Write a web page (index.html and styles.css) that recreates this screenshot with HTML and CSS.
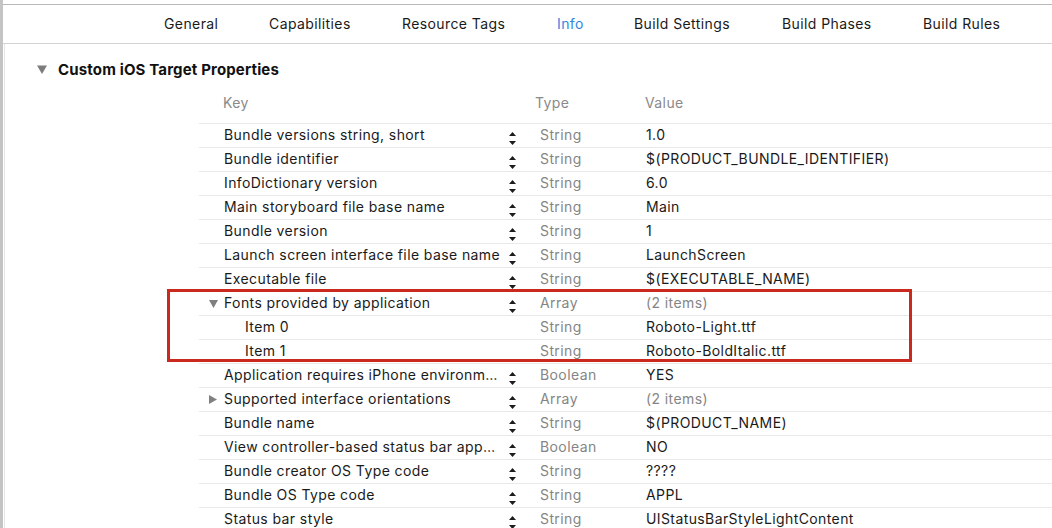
FILE: index.html
```html
<!DOCTYPE html>
<html>
<head>
<meta charset="utf-8">
<link rel="stylesheet" href="styles.css">
</head>
<body>
<div class="app">
  <div class="strip"></div>
  <div class="main">
    <div class="topgap"></div>
    <nav class="tabs">
      <span class="tab">General</span>
      <span class="tab">Capabilities</span>
      <span class="tab">Resource Tags</span>
      <span class="tab active">Info</span>
      <span class="tab">Build Settings</span>
      <span class="tab">Build Phases</span>
      <span class="tab">Build Rules</span>
    </nav>
    <div class="content">
      <div class="section-head">
        <svg class="sec-tri" width="10" height="9" viewBox="0 0 10 9"><path d="M0 0.5 L10 0.5 L5 9 Z" fill="#7c7c7c"/></svg>
        <span class="section-title">Custom iOS Target Properties</span>
      </div>
      <div class="thead">
        <span>Key</span><span>Type</span><span>Value</span>
      </div>
      <div class="table">
        <div class="row"><span class="tri"></span><span class="key">Bundle versions string, short</span><span class="step"><svg width="7" height="23" viewBox="0 0 7 23"><path d="M3.5 8 L7 12 L0 12 Z M0 17 L7 17 L3.5 21 Z" fill="#1c1c1c"/></svg></span><span class="type">String</span><span class="value">1.0</span></div>
        <div class="row"><span class="tri"></span><span class="key">Bundle identifier</span><span class="step"><svg width="7" height="23" viewBox="0 0 7 23"><path d="M3.5 8 L7 12 L0 12 Z M0 17 L7 17 L3.5 21 Z" fill="#1c1c1c"/></svg></span><span class="type">String</span><span class="value">$(PRODUCT_BUNDLE_IDENTIFIER)</span></div>
        <div class="row"><span class="tri"></span><span class="key">InfoDictionary version</span><span class="step"><svg width="7" height="23" viewBox="0 0 7 23"><path d="M3.5 8 L7 12 L0 12 Z M0 17 L7 17 L3.5 21 Z" fill="#1c1c1c"/></svg></span><span class="type">String</span><span class="value">6.0</span></div>
        <div class="row"><span class="tri"></span><span class="key">Main storyboard file base name</span><span class="step"><svg width="7" height="23" viewBox="0 0 7 23"><path d="M3.5 8 L7 12 L0 12 Z M0 17 L7 17 L3.5 21 Z" fill="#1c1c1c"/></svg></span><span class="type">String</span><span class="value">Main</span></div>
        <div class="row"><span class="tri"></span><span class="key">Bundle version</span><span class="step"><svg width="7" height="23" viewBox="0 0 7 23"><path d="M3.5 8 L7 12 L0 12 Z M0 17 L7 17 L3.5 21 Z" fill="#1c1c1c"/></svg></span><span class="type">String</span><span class="value">1</span></div>
        <div class="row"><span class="tri"></span><span class="key">Launch screen interface file base name</span><span class="step"><svg width="7" height="23" viewBox="0 0 7 23"><path d="M3.5 8 L7 12 L0 12 Z M0 17 L7 17 L3.5 21 Z" fill="#1c1c1c"/></svg></span><span class="type">String</span><span class="value">LaunchScreen</span></div>
        <div class="row"><span class="tri"></span><span class="key">Executable file</span><span class="step"><svg width="7" height="23" viewBox="0 0 7 23"><path d="M3.5 8 L7 12 L0 12 Z M0 17 L7 17 L3.5 21 Z" fill="#1c1c1c"/></svg></span><span class="type">String</span><span class="value">$(EXECUTABLE_NAME)</span></div>
        <div class="row"><span class="tri"><svg width="9" height="8" viewBox="0 0 9 8"><path d="M0 0 L9 0 L4.5 8 Z" fill="#808080"/></svg></span><span class="key">Fonts provided by application</span><span class="step"><svg width="7" height="23" viewBox="0 0 7 23"><path d="M3.5 8 L7 12 L0 12 Z M0 17 L7 17 L3.5 21 Z" fill="#1c1c1c"/></svg></span><span class="type">Array</span><span class="value dim">(2 items)</span></div>
        <div class="row"><span class="tri"></span><span class="key child">Item 0</span><span class="step"></span><span class="type">String</span><span class="value">Roboto-Light.ttf</span></div>
        <div class="row"><span class="tri"></span><span class="key child">Item 1</span><span class="step"></span><span class="type">String</span><span class="value">Roboto-BoldItalic.ttf</span></div>
        <div class="row"><span class="tri"></span><span class="key">Application requires iPhone environm…</span><span class="step"><svg width="7" height="23" viewBox="0 0 7 23"><path d="M3.5 8 L7 12 L0 12 Z M0 17 L7 17 L3.5 21 Z" fill="#1c1c1c"/></svg></span><span class="type">Boolean</span><span class="value">YES</span></div>
        <div class="row"><span class="tri"><svg width="8" height="9" viewBox="0 0 8 9"><path d="M0 0 L8 4.5 L0 9 Z" fill="#808080"/></svg></span><span class="key">Supported interface orientations</span><span class="step"><svg width="7" height="23" viewBox="0 0 7 23"><path d="M3.5 8 L7 12 L0 12 Z M0 17 L7 17 L3.5 21 Z" fill="#1c1c1c"/></svg></span><span class="type">Array</span><span class="value dim">(2 items)</span></div>
        <div class="row"><span class="tri"></span><span class="key">Bundle name</span><span class="step"><svg width="7" height="23" viewBox="0 0 7 23"><path d="M3.5 8 L7 12 L0 12 Z M0 17 L7 17 L3.5 21 Z" fill="#1c1c1c"/></svg></span><span class="type">String</span><span class="value">$(PRODUCT_NAME)</span></div>
        <div class="row"><span class="tri"></span><span class="key">View controller-based status bar app…</span><span class="step"><svg width="7" height="23" viewBox="0 0 7 23"><path d="M3.5 8 L7 12 L0 12 Z M0 17 L7 17 L3.5 21 Z" fill="#1c1c1c"/></svg></span><span class="type">Boolean</span><span class="value">NO</span></div>
        <div class="row"><span class="tri"></span><span class="key">Bundle creator OS Type code</span><span class="step"><svg width="7" height="23" viewBox="0 0 7 23"><path d="M3.5 8 L7 12 L0 12 Z M0 17 L7 17 L3.5 21 Z" fill="#1c1c1c"/></svg></span><span class="type">String</span><span class="value">????</span></div>
        <div class="row"><span class="tri"></span><span class="key">Bundle OS Type code</span><span class="step"><svg width="7" height="23" viewBox="0 0 7 23"><path d="M3.5 8 L7 12 L0 12 Z M0 17 L7 17 L3.5 21 Z" fill="#1c1c1c"/></svg></span><span class="type">String</span><span class="value">APPL</span></div>
        <div class="row"><span class="tri"></span><span class="key">Status bar style</span><span class="step"><svg width="7" height="23" viewBox="0 0 7 23"><path d="M3.5 8 L7 12 L0 12 Z M0 17 L7 17 L3.5 21 Z" fill="#1c1c1c"/></svg></span><span class="type">String</span><span class="value">UIStatusBarStyleLightContent</span></div>
      </div>
    </div>
  </div>
  <div class="highlight"></div>
</div>
</body>
</html>
```

FILE: styles.css
```css
html, body {
  margin: 0;
  padding: 0;
  background: #ffffff;
}
body {
  width: 1052px;
  height: 528px;
  overflow: hidden;
  font-family: Inter, "Liberation Sans", Arial, sans-serif;
  font-size: 14px;
  letter-spacing: 0.4px;
  color: #1a1a1a;
}
.app {
  position: relative;
  display: flex;
  width: 1052px;
  height: 528px;
}
.strip {
  width: 3px;
  flex: none;
  background: #c4c4c4;
}
.main {
  flex: 1;
  display: flex;
  flex-direction: column;
  min-width: 0;
}
.topgap {
  height: 4px;
  flex: none;
}
.tabs {
  flex: none;
  height: 38px;
  border-top: 1px solid #b9b9b9;
  border-bottom: 1px solid #d3d3d3;
  display: grid;
  grid-template-columns: 105px 133px 155px 77px 148px 141px auto;
  align-items: center;
  padding-left: 161px;
  font-size: 14px;
  letter-spacing: 0.4px;
  color: #1a1a1a;
}
.tab {
  white-space: nowrap;
  line-height: 18px;
}
.tab.active {
  color: #2f87e3;
}
.content {
  flex: 1;
  border-left: 1px solid #e6e6e6;
  margin-left: 1px;
}
.section-head {
  display: flex;
  align-items: center;
  height: 20px;
  margin-top: 15px;
  padding-left: 32px;
}
.sec-tri {
  flex: none;
  margin-right: 11px;
}
.section-title {
  font-weight: 700;
  font-size: 15px;
  letter-spacing: 0.15px;
  color: #111;
}
.thead {
  display: grid;
  grid-template-columns: 312px 110px auto;
  margin-left: 218px;
  margin-top: 11px;
  height: 24px;
  align-items: center;
  color: #8a8a8a;
  margin-bottom: 9px;
}
.table {
  margin-left: 194px;
}
.row {
  display: grid;
  grid-template-columns: 25px 285px 31px 106px auto;
  height: 23px;
  border-top: 1px solid #e9e9e9;
  align-items: center;
  white-space: nowrap;
}
.tri {
  display: flex;
  align-items: center;
  padding-left: 10px;
  height: 23px;
}
.key, .type, .value {
  line-height: 19px;
  margin-bottom: 2px;
}
.key {
  overflow: hidden;
}
.key.child {
  padding-left: 21px;
}
.step {
  display: flex;
  height: 23px;
}
.step svg {
  display: block;
}
.type {
  color: #858585;
}
.value.dim {
  color: #858585;
}
.highlight {
  position: absolute;
  left: 167px;
  top: 289px;
  width: 739px;
  height: 67px;
  border: 3px solid #c92a1d;
}
```
